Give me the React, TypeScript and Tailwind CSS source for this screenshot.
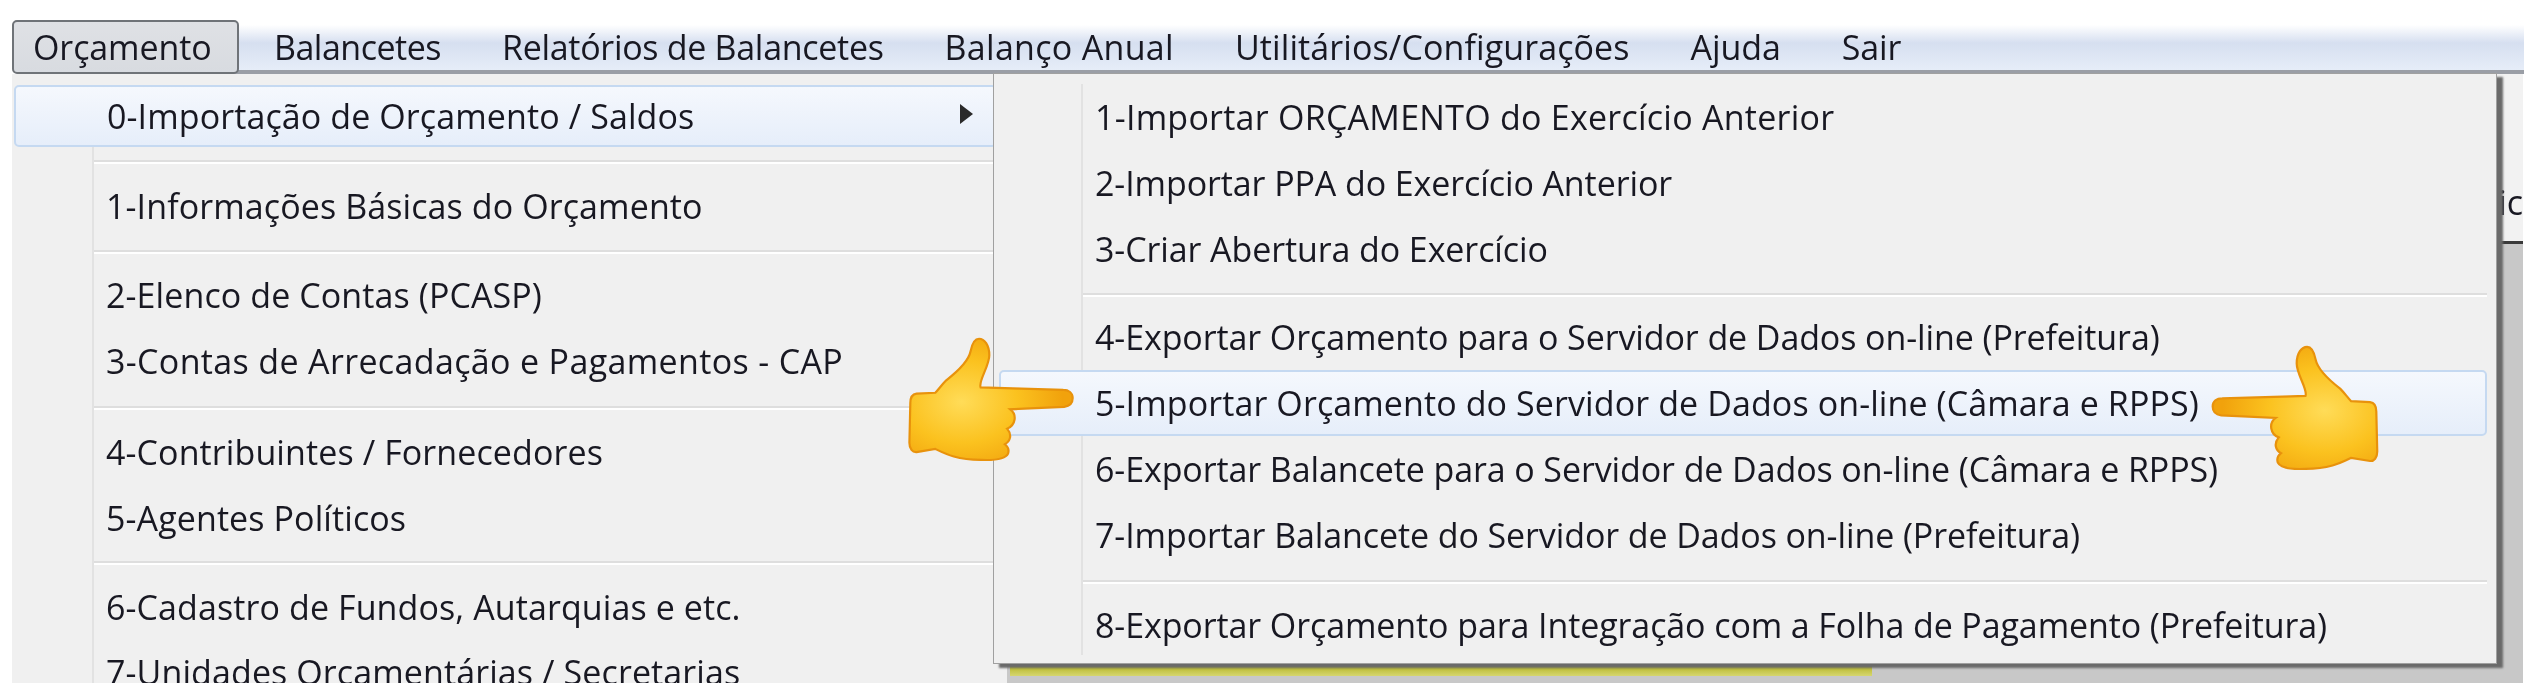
const topItems = [
  { label: 'Balancetes', spacing: 'tracking-[-0.5px]' },
  { label: 'Relatórios de Balancetes', spacing: 'tracking-[-0.3px]' },
  { label: 'Balanço Anual', spacing: 'tracking-[0.3px]' },
  { label: 'Utilitários/Configurações', spacing: 'tracking-[0.1px]' },
  { label: 'Ajuda', spacing: 'tracking-[-0.1px]' },
  { label: 'Sair', spacing: 'tracking-[-0.1px]' },
]

function Row({ label, className = '' }: { label: string; className?: string }) {
  return <div className={`flex h-[66px] items-center whitespace-nowrap pl-[12px] ${className}`}>{label}</div>
}

function Sep({ className }: { className: string }) {
  return (
    <div className={className}>
      <div className="h-[2px] bg-[#dedede]" />
      <div className="h-[2px] bg-white" />
    </div>
  )
}

function Hand({ className, id }: { className: string; id: string }) {
  return (
    <svg viewBox="60 30 550 410" className={className}>
      <defs>
        <radialGradient id={id} cx="0.32" cy="0.52" r="0.62">
          <stop offset="0" stopColor="#ffdc58" />
          <stop offset="0.55" stopColor="#fbc21f" />
          <stop offset="1" stopColor="#f1a20c" />
        </radialGradient>
      </defs>
      <path
        d="M595 232C595 215 582 206 565 206L300 198C292 178 328 130 328 95C328 62 312 42 295 42C278 42 272 62 268 82C262 112 235 140 190 175C175 190 165 205 155 215L95 218C80 220 75 232 75 248L72 375C72 395 82 406 95 405L155 395C190 412 225 430 300 430C345 432 380 428 388 410C392 398 388 388 378 380C395 370 402 350 385 330C412 320 418 285 395 268L568 260C585 258 595 248 595 232Z"
        fill={`url(#${id})`}
        stroke="#e8920c"
        strokeWidth="7"
      />
    </svg>
  )
}

export default function App() {
  return (
    <div className="relative h-[694px] w-[2534px] overflow-hidden bg-white pl-[12px] pt-[20px] font-['Open_Sans','Noto_Sans',sans-serif] text-[34px] tracking-[-0.1px] text-[#181822] blur-[0.7px]">
      {/* menu bar */}
      <div className="flex h-[54px] w-[2512px] items-stretch">
        <div className="z-10 flex w-[227px] items-center rounded-[5px] border-2 border-[#6f7378] bg-gradient-to-b from-[#dfe1e5] to-[#d8dbe0] pl-[19px]">
          Orçamento
        </div>
        <div className="-ml-[8px] mt-[5px] flex flex-1 items-center gap-[61px] border-b-[4px] border-[#9a9ea6] bg-gradient-to-b from-white via-[#d6dff0] via-40% to-[#e6edf8] pl-[43px]">
          {topItems.map((t) => (
            <span key={t.label} className={`whitespace-nowrap ${t.spacing}`}>{t.label}</span>
          ))}
        </div>
      </div>

      <div className="flex h-[609px] w-[2511px]">
        {/* main menu */}
        <div className="flex w-[995px] bg-[#f0f0f0] pt-[11px] tracking-[0.1px]">
          <div className="w-[82px] border-r-2 border-[#e2e2e2]" />
          <div className="min-w-0 flex-1">
            <div className="relative -ml-[80px] mr-[10px] flex h-[62px] items-center whitespace-nowrap rounded-[5px] border-2 border-[#c5d9f1] bg-gradient-to-b from-[#f5f8fd] to-[#e6eefa] pl-[91px]">
              0-Importação de Orçamento / Saldos
              <svg viewBox="0 0 13 20" className="absolute left-[944px] top-[17px] h-[20px] w-[13px]">
                <path d="M0 0L13 10L0 20Z" fill="#2a2a2a" />
              </svg>
            </div>
            <Sep className="pt-[13px] h-[26px]" />
            <Row label="1-Informações Básicas do Orçamento" />
            <Sep className="pt-[11px] h-[23px]" />
            <Row label="2-Elenco de Contas (PCASP)" />
            <Row label="3-Contas de Arrecadação e Pagamentos - CAP" className="tracking-[0.35px]" />
            <Sep className="pt-[12px] h-[25px]" />
            <Row label="4-Contribuintes / Fornecedores" />
            <Row label="5-Agentes Políticos" />
            <Sep className="pt-[10px] h-[23px]" />
            <Row label="6-Cadastro de Fundos, Autarquias e etc." />
            <div className="h-[43px] overflow-hidden whitespace-nowrap pl-[12px] pt-[10px] leading-[44px]">
              7-Unidades Orçamentárias / Secretarias
            </div>
          </div>
        </div>

        {/* window behind the menus */}
        <div className="flex flex-1 flex-col overflow-hidden">
          <div className="flex h-[167px] items-center justify-end bg-[#f2f2f2] pl-[1490px] pt-[90px]">
            <span>ric</span>
          </div>
          <div className="h-[3px] bg-[#3a3a3a]" />
          <div className="flex flex-1 flex-col justify-end bg-[#c8c8c8]">
            <div className="mb-[7px] ml-[3px] h-[11px] w-[862px] bg-gradient-to-b from-[#b3b300] to-[#d6d66e]" />
          </div>
        </div>
      </div>

      {/* submenu */}
      <div className="absolute left-[993px] top-[73px] flex h-[591px] w-[1504px] border border-[#a0a0a0] bg-[#f0f0f0] pt-[10px] shadow-[6px_4px_2px_#6a6a6a]">
        <div className="mb-[8px] w-[89px] border-r-2 border-[#e2e2e2]" />
        <div className="min-w-0 flex-1 pr-[9px]">
          <Row label="1-Importar ORÇAMENTO do Exercício Anterior" className="tracking-[0.25px]" />
          <Row label="2-Importar PPA do Exercício Anterior" />
          <Row label="3-Criar Abertura do Exercício" />
          <Sep className="pt-[11px] h-[22px]" />
          <Row label="4-Exportar Orçamento para o Servidor de Dados on-line (Prefeitura)" />
          <div className="-ml-[84px] flex h-[66px] items-center whitespace-nowrap rounded-[5px] border-2 border-[#c5d9f1] bg-gradient-to-b from-[#f5f8fd] to-[#e6eefa] pl-[94px] tracking-[0.1px]">
            5-Importar Orçamento do Servidor de Dados on-line (Câmara e RPPS)
          </div>
          <Row label="6-Exportar Balancete para o Servidor de Dados on-line (Câmara e RPPS)" />
          <Row label="7-Importar Balancete do Servidor de Dados on-line (Prefeitura)" />
          <Sep className="pt-[12px] h-[24px]" />
          <Row label="8-Exportar Orçamento para Integração com a Folha de Pagamento (Prefeitura)" />
        </div>
      </div>

      {/* pointing hands drawn over the menu */}
      <Hand id="skinLeft" className="absolute left-[905px] top-[335px] h-[128px] w-[173px]" />
      <Hand id="skinRight" className="absolute left-[2207px] top-[343px] h-[129px] w-[175px] -scale-x-100" />
    </div>
  )
}
